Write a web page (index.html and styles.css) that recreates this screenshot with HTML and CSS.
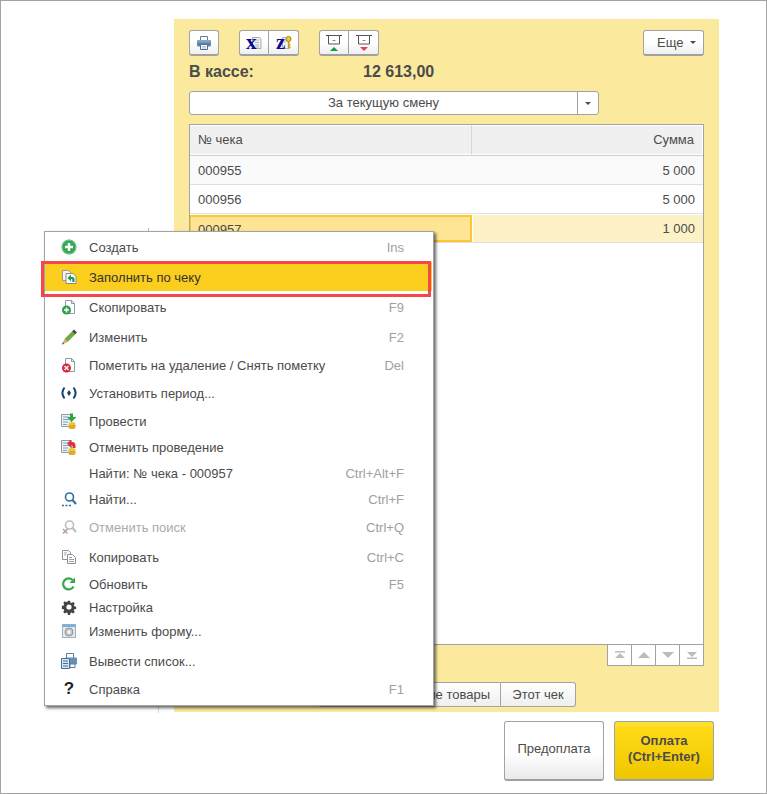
FILE: index.html
```html
<!DOCTYPE html>
<html lang="ru">
<head>
<meta charset="utf-8">
<title>Касса</title>
<link rel="stylesheet" href="styles.css">
</head>
<body>
<div class="window">
  <div class="panel">
    <div class="toolbar">
      <div class="group">
        <button class="tool"><svg class="ico" viewBox="0 0 16 16"><path d="M4.500 1.500h7v4h-7z" fill="#fff" stroke="#5d7f9e"/><rect x="1" y="5" width="14" height="6.500" rx="1.500" fill="#5b84a8"/><rect x="1" y="5" width="14" height="2.500" rx="1" fill="#86a5c0"/><path d="M4.500 9.500h7v5h-7z" fill="#fff" stroke="#4c6f8e"/><path d="M6 11.500h4M6 13h4" stroke="#9ab" stroke-width=".8"/></svg></button>
      </div>
      <div class="group">
        <button class="tool"><svg class="ico ico-over" viewBox="0 0 16 16"><path d="M6.500 2.500h7l1.500 1.500v9.500H6.500z" fill="#f2f2f2" stroke="#a9a9a9"/><path d="M9 5h4M9 7.500h4M9 10h4M9 12h4" stroke="#b5b5b5"/><text class="glyph" x="0" y="14">x</text></svg></button>
        <button class="tool"><svg class="ico ico-over" viewBox="0 0 16 16"><path d="M6.500 2.500h6.500v11H6.500z" fill="#f2f2f2" stroke="#b3b3b3"/><path d="M8 5h3M8 7h2" stroke="#bbb"/><circle cx="12.500" cy="4" r="2.500" fill="#f7cf2c" stroke="#a07d10"/><path d="M12.500 6.500v7M12.500 10h2M12.500 12.500h2" stroke="#c79a14" stroke-width="1.300"/><text class="glyph" x="0" y="14">z</text></svg></button>
      </div>
      <div class="group">
        <button class="tool"><svg class="ico" viewBox="0 0 16 16"><path d="M0 .5h16" stroke="#444"/><path d="M2.500 .5h11v8.500h-11z" fill="#fff" stroke="#555"/><path d="M6.500 5.500h3" stroke="#888"/><path d="M8 12l4 4H4z" fill="#0f9b4b"/></svg></button>
        <button class="tool"><svg class="ico" viewBox="0 0 16 16"><path d="M0 .5h16" stroke="#444"/><path d="M2.500 .5h11v8.500h-11z" fill="#fff" stroke="#555"/><path d="M6.500 5.500h3" stroke="#888"/><path d="M8 16l-4-4h8z" fill="#e8434c"/></svg></button>
      </div>
      <button class="more">Еще<span class="caret"></span></button>
    </div>

    <div class="balance"><span class="balance-label">В кассе:</span><span>12 613,00</span></div>

    <div class="select">
      <span class="select-text">За текущую смену</span>
      <span class="select-btn"><span class="caret"></span></span>
    </div>

    <div class="table">
      <div class="thead">
        <div class="th col-a">№ чека</div>
        <div class="th col-b">Сумма</div>
      </div>
      <div class="tr tr-odd"><div class="td col-a">000955</div><div class="td col-b">5 000</div></div>
      <div class="tr"><div class="td col-a">000956</div><div class="td col-b">5 000</div></div>
      <div class="tr tr-sel"><div class="td col-a">000957</div><div class="td col-b">1 000</div></div>
    </div>

    <div class="pager">
      <span class="page"><svg viewBox="0 0 14 10"><path d="M2 1h10v1.500H2zM7 3l5 5H2z" fill="#bdbdb5"/></svg></span>
      <span class="page"><svg viewBox="0 0 14 10"><path d="M7 2l6 6H1z" fill="#bdbdb5"/></svg></span>
      <span class="page"><svg viewBox="0 0 14 10"><path d="M7 8L1 2h12z" fill="#bdbdb5"/></svg></span>
      <span class="page"><svg viewBox="0 0 14 10"><path d="M7 7L2 2h10zM2 7.500h10V9H2z" fill="#bdbdb5"/></svg></span>
    </div>

    <div class="tabs">
      <span class="tab tab-wide">Новые товары</span>
      <span class="tab">Этот чек</span>
    </div>
  </div>

  <div class="footer">
    <button class="big">Предоплата</button>
    <button class="big big-pay">Оплата<br>(Ctrl+Enter)</button>
  </div>

  <span class="trace trace-low"></span>
  <span class="trace trace-top"></span>

  <div class="menu">
    <div class="item"><svg class="ico" viewBox="0 0 16 16"><circle cx="8" cy="8" r="7.500" fill="#35a652"/><circle cx="8" cy="8" r="6.800" fill="none" stroke="#8fd4a2" stroke-width=".7"/><path d="M8 4v8M4 8h8" stroke="#fff" stroke-width="2.400"/></svg><span class="label">Создать</span><span class="key">Ins</span></div>
    <div class="item item-gold"><svg class="ico" viewBox="0 0 16 16"><path d="M1.500 1.500h6l2 2v8h-8z" fill="#f4f4f4" stroke="#9a9a9a"/><path d="M5 4.500h7l3 3v7H5z" fill="#fff" stroke="#8a8a8a"/><path d="M6.500 9l3.500-3.500V8h1.500c1.500 0 2 1 2 3v2h-2.200v-2c0-.7-.3-1-1-1H10v2.500z" fill="#1f9a4c"/></svg><span class="label label-on">Заполнить по чеку</span></div>
    <div class="item m8"><svg class="ico" viewBox="0 0 16 16"><path d="M4.500 1.500h6l3 3v10h-9z" fill="#fff" stroke="#8f9aa5"/><path d="M10.500 1.500v3h3" fill="none" stroke="#8f9aa5"/><circle cx="5.500" cy="11" r="4.500" fill="#2f9e4c"/><path d="M5.500 8.500v5M3 11h5" stroke="#fff" stroke-width="1.500"/></svg><span class="label">Скопировать</span><span class="key">F9</span></div>
    <div class="item m8"><svg class="ico" viewBox="0 0 16 16"><path d="M3.500 10l7.500-7.500 3 3L6.500 13z" fill="#6cab3e"/><path d="M11 2.500l2-2 3 3-2 2z" fill="#4a4a4a"/><path d="M3.500 10l3 3L1 15.500z" fill="#eda765"/><path d="M1 15.500l.8-2.300 1.500 1.500z" fill="#555"/></svg><span class="label">Изменить</span><span class="key">F2</span></div>
    <div class="item m6"><svg class="ico" viewBox="0 0 16 16"><path d="M4.500 1.500h6l3 3v10h-9z" fill="#fff" stroke="#8f9aa5"/><path d="M10.500 1.500v3h3" fill="none" stroke="#8f9aa5"/><circle cx="5.500" cy="11" r="4.500" fill="#d9263a"/><path d="M3.500 9l4 4M7.500 9l-4 4" stroke="#fff" stroke-width="1.400"/></svg><span class="label">Пометить на удаление / Снять пометку</span><span class="key">Del</span></div>
    <div class="item m6"><svg class="ico" viewBox="0 0 16 16"><path d="M3.500 2.500C.8 6 .8 10 3.500 13.500M12.500 2.500c2.700 3.500 2.700 7.500 0 11" fill="none" stroke="#17456d" stroke-width="2"/><path d="M8 5l2 3-2 3-2-3z" fill="#17456d"/></svg><span class="label">Установить период...</span></div>
    <div class="item m6"><svg class="ico" viewBox="0 0 16 16"><path d="M.500 1.500h10v12h-10z" fill="#eef3f6" stroke="#8b9aa6"/><path d="M2 4h5M2 6.500h6M2 9h5M2 11.500h4" stroke="#7c9db7"/><path d="M9 .5h3v3.500h3.500L10.500 9 6 4h3z" fill="#29a845"/><ellipse cx="11" cy="10.500" rx="3.500" ry="1.500" fill="#f0c63d"/><path d="M7.500 10.500v4c0 2 7 2 7 0v-4c0 2-7 2-7 0z" fill="#e0ac27"/></svg><span class="label">Провести</span></div>
    <div class="item m4"><svg class="ico" viewBox="0 0 16 16"><path d="M.500 1.500h10v12h-10z" fill="#eef3f6" stroke="#8b9aa6"/><path d="M2 4h5M2 6.500h6M2 9h5M2 11.500h4" stroke="#7c9db7"/><path d="M6 4.500L10 .5v2.500h1.500c2 0 3 1.500 3 4V9h-3V7.500c0-1-.5-1.500-1.500-1.500v3z" fill="#e2342f"/><ellipse cx="11" cy="10.500" rx="3.500" ry="1.500" fill="#f0c63d"/><path d="M7.500 10.500v4c0 2 7 2 7 0v-4c0 2-7 2-7 0z" fill="#e0ac27"/></svg><span class="label">Отменить проведение</span></div>
    <div class="item m4"><span class="ico"></span><span class="label">Найти: № чека - 000957</span><span class="key">Ctrl+Alt+F</span></div>
    <div class="item m4"><svg class="ico" viewBox="0 0 16 16"><circle cx="8.500" cy="6" r="4" fill="#fff" stroke="#2f6f9f" stroke-width="1.600"/><path d="M11.500 9l3.500 4" stroke="#2f6f9f" stroke-width="2"/><path d="M1 14.500h2M4.500 14.500h2M8 14.500h2" stroke="#2f6f9f" stroke-width="1.500"/></svg><span class="label">Найти...</span><span class="key">Ctrl+F</span></div>
    <div class="item m6"><svg class="ico" viewBox="0 0 16 16"><circle cx="8.500" cy="6" r="4" fill="#fff" stroke="#b5bfc6" stroke-width="1.600"/><path d="M11.500 9l3.500 4" stroke="#b5bfc6" stroke-width="2"/><path d="M2 10l4.500 4.500M6.500 10L2 14.500" stroke="#b79f9c" stroke-width="1.600"/></svg><span class="label label-off">Отменить поиск</span><span class="key">Ctrl+Q</span></div>
    <div class="item m8"><svg class="ico" viewBox="0 0 16 16"><path d="M1.500 1.500h6l2 2v7h-8z" fill="#fff" stroke="#8a9199"/><path d="M6.500 5.500h5l3 3v6h-8z" fill="#fff" stroke="#8a9199"/><path d="M3 4h3M3 6h2M8 8.500h3M8 10.500h5M8 12.500h5" stroke="#9aa3ab"/></svg><span class="label">Копировать</span><span class="key">Ctrl+C</span></div>
    <div class="item m5"><svg class="ico" viewBox="0 0 16 16"><path d="M12.500 10.500A5.500 5.500 0 1 1 11.500 4" fill="none" stroke="#34a84a" stroke-width="2.200"/><path d="M14 1.500v5.500H8.500z" fill="#34a84a"/></svg><span class="label">Обновить</span><span class="key">F5</span></div>
    <div class="item m1"><svg class="ico" viewBox="0 0 16 16"><path d="M6.800 1h2.400l.4 2 1.300.6 1.800-1.100 1.700 1.700-1.100 1.800.6 1.300 2 .4v2.400l-2 .4-.6 1.300 1.100 1.800-1.700 1.700-1.800-1.100-1.300.6-.4 2H6.800l-.4-2-1.300-.6-1.800 1.100-1.700-1.700 1.100-1.800-.6-1.300-2-.4V6.700l2-.4.6-1.300-1.100-1.800 1.700-1.700 1.800 1.100 1.300-.6z" fill="#444" transform="translate(.8 .8) scale(.9)"/><circle cx="8" cy="8" r="2.600" fill="#fff"/></svg><span class="label">Настройка</span></div>
    <div class="item m2"><svg class="ico" viewBox="0 0 16 16"><rect x="1.500" y="1.500" width="13" height="13" fill="#e6e9ec" stroke="#9fb1c2"/><path d="M1.500 1.500h13v2.500h-13z" fill="#78aee0"/><circle cx="8" cy="9" r="4" fill="#c6cacd" stroke="#8d9296"/><circle cx="8" cy="9" r="1.500" fill="#fff"/></svg><span class="label">Изменить форму...</span></div>
    <div class="item m8"><svg class="ico" viewBox="0 0 16 16"><path d="M5.500 .500h7v5h-7z" fill="#fff" stroke="#5d7f9e"/><rect x="4" y="4.500" width="12" height="7" rx="1" fill="#6690b3"/><path d="M.500 5.500h8v10h-8z" fill="#d8e6f0" stroke="#3f7099"/><path d="M2 8h5M2 10.500h5M2 13h5" stroke="#3f7099"/><path d="M9 11h5v3.500H9z" fill="#fff" stroke="#5d7f9e"/></svg><span class="label">Вывести список...</span></div>
    <div class="item m6"><span class="ico help">?</span><span class="label">Справка</span><span class="key">F1</span></div>
  </div>

  <span class="marker"></span>
</div>
</body>
</html>
```

FILE: styles.css
```css
* { box-sizing: border-box; }

html, body { margin: 0; padding: 0; background: #fff; }

body {
  font-family: "Liberation Sans", Arial, sans-serif;
  font-size: 13px;
  color: #4b4b4b;
}

button { font: inherit; color: inherit; padding: 0; cursor: default; }

.window {
  position: relative;
  width: 767px;
  height: 794px;
  border: 1px solid #a3a3a3;
  padding: 18px 47px 0 173px;
  overflow: hidden;
}

.panel {
  height: 693px;
  padding: 11px 15px 0;
  background: #fbea9e;
  display: flex;
  flex-direction: column;
}

.toolbar { display: flex; gap: 20px; height: 26px; }

.group { display: flex; }

.tool {
  width: 30px;
  height: 26px;
  display: flex;
  align-items: center;
  justify-content: center;
  background: linear-gradient(#fff 50%, #efefef);
  border: 1px solid #a3a3a3;
  border-bottom: 2px solid #a0a0a0;
  border-left-width: 0;
}

.tool:first-child { border-left-width: 1px; border-radius: 3px 0 0 3px; }
.tool:last-child { border-radius: 0 3px 3px 0; }
.tool:only-child { border-radius: 3px; }

.ico { width: 16px; height: 16px; flex: none; display: block; }
.ico-over { overflow: visible; }

.glyph {
  font-family: "Liberation Serif", serif;
  font-weight: 700;
  font-size: 21px;
  fill: #0a0a9a;
}

.more {
  margin-left: auto;
  width: 61px;
  height: 26px;
  padding-left: 13px;
  display: flex;
  align-items: center;
  gap: 7px;
  background: linear-gradient(#fff 50%, #efefef);
  border: 1px solid #a3a3a3;
  border-bottom: 2px solid #a0a0a0;
  border-radius: 3px;
}

.caret {
  width: 0;
  height: 0;
  border-left: 3px solid transparent;
  border-right: 3px solid transparent;
  border-top: 3px solid #4b4b4b;
}

.balance {
  display: flex;
  height: 18px;
  margin-top: 7px;
  font-size: 16px;
  font-weight: 700;
  line-height: 18px;
}

.balance-label { width: 174px; }

.select {
  display: flex;
  width: 410px;
  height: 24px;
  margin-top: 10px;
  background: #fff;
  border: 1px solid #a3a3a3;
  border-radius: 3px;
}

.select-text { flex: 1; text-align: center; line-height: 22px; }

.select-btn {
  width: 21px;
  display: flex;
  align-items: center;
  justify-content: center;
  border-left: 1px solid #a3a3a3;
}

.table {
  height: 521px;
  margin-top: 9px;
  background: #fff;
  border: 1px solid #a3a3a3;
}

.thead, .tr { display: flex; }

.thead { height: 31px; border-bottom: 1px solid #cfcfcf; }

.th {
  background: #f0f0f0;
  border: 1px solid #fff;
  border-left-width: 0;
  line-height: 28px;
  padding: 0 8px;
}

.col-a { width: 282px; padding: 0 8px; }
.col-b { flex: 1; text-align: right; padding: 0 8px; }
.thead .col-a { border-right: 1px solid #d8d8d8; }

.tr { height: 29px; border-bottom: 1px solid #e0e0e0; }
.tr-odd { background: #fafafa; }
.td { line-height: 29px; }

.tr-sel .col-a {
  background: #fee596;
  border: 2px solid #fcc82d;
  border-left-width: 1px;
  line-height: 25px;
  margin-top: 1px;
  height: 27px;
  padding-left: 7px;
}
.tr-sel .col-b { background: #fdf2c5; margin: 1px 0 0 1px; height: 27px; line-height: 27px; }

.pager {
  display: flex;
  align-self: flex-end;
  height: 22px;
  margin-top: -1px;
  background: #fff;
  border: 1px solid #a3a3a3;
}

.page {
  width: 24px;
  display: flex;
  align-items: center;
  justify-content: center;
  border-left: 1px solid #a3a3a3;
}

.page:first-child { border-left: 0; width: 23px; }
.page svg { width: 14px; height: 10px; display: block; }

.tabs { display: flex; margin: 16px 0 0 129px; height: 25px; }

.tab {
  width: 75px;
  text-align: center;
  line-height: 23px;
  background: linear-gradient(#fff, #efefef);
  border: 1px solid #a3a3a3;
  border-left-width: 0;
  border-radius: 0 3px 3px 0;
}

.tab-wide {
  width: 183px;
  text-align: right;
  padding-right: 10px;
  border-left-width: 1px;
  border-radius: 3px 0 0 3px;
}

.footer {
  display: flex;
  justify-content: flex-end;
  gap: 10px;
  margin: 9px 5px 0 0;
}

.big {
  width: 100px;
  height: 60px;
  padding-bottom: 4px;
  background: linear-gradient(#fff 55%, #e9e9e9);
  border: 1px solid #a3a3a3;
  border-bottom: 2px solid #a0a0a0;
  border-radius: 3px;
  line-height: 16px;
}

.big-pay {
  background: linear-gradient(#ffe02e 0, #ffe02e 7%, #ffd916 10%, #efc700);
  font-weight: 700;
}

.trace { position: absolute; width: 1px; background: #d8d8d8; }
.trace-low { left: 157px; top: 700px; height: 12px; }
.trace-top { left: 147px; top: 227px; height: 4px; background: #b5b5b5; }

.menu {
  position: absolute;
  left: 43px;
  top: 230px;
  width: 390px;
  height: 475px;
  padding-top: 4px;
  background: #fff;
  border: 1px solid #a3a3a3;
  box-shadow: 2px 2px 3px rgba(0, 0, 0, .6);
}

.item {
  display: flex;
  align-items: center;
  height: 22px;
  padding: 0 29px 0 16px;
  white-space: nowrap;
}

.m1 { margin-top: 1px; }
.m2 { margin-top: 2px; }
.m4 { margin-top: 4px; }
.m5 { margin-top: 5px; }
.m6 { margin-top: 6px; }
.m8 { margin-top: 8px; }

.item-gold {
  background: #fbcd1c;
  height: 29px;
  margin: 4px 1px 0 0;
  padding-top: 1px;
}

.item-gold + .item { margin-top: 5px; }

.label { margin-left: 12px; flex: 1; }
.label-on { color: #333; }
.label-off { color: #aaa; }
.key { color: #a0a0a0; }

.help {
  font-size: 17px;
  font-weight: 700;
  color: #222;
  text-align: center;
  line-height: 16px;
}

.marker {
  position: absolute;
  left: 40px;
  top: 260px;
  width: 390px;
  height: 36px;
  border: 3px solid #f5474b;
}
```
